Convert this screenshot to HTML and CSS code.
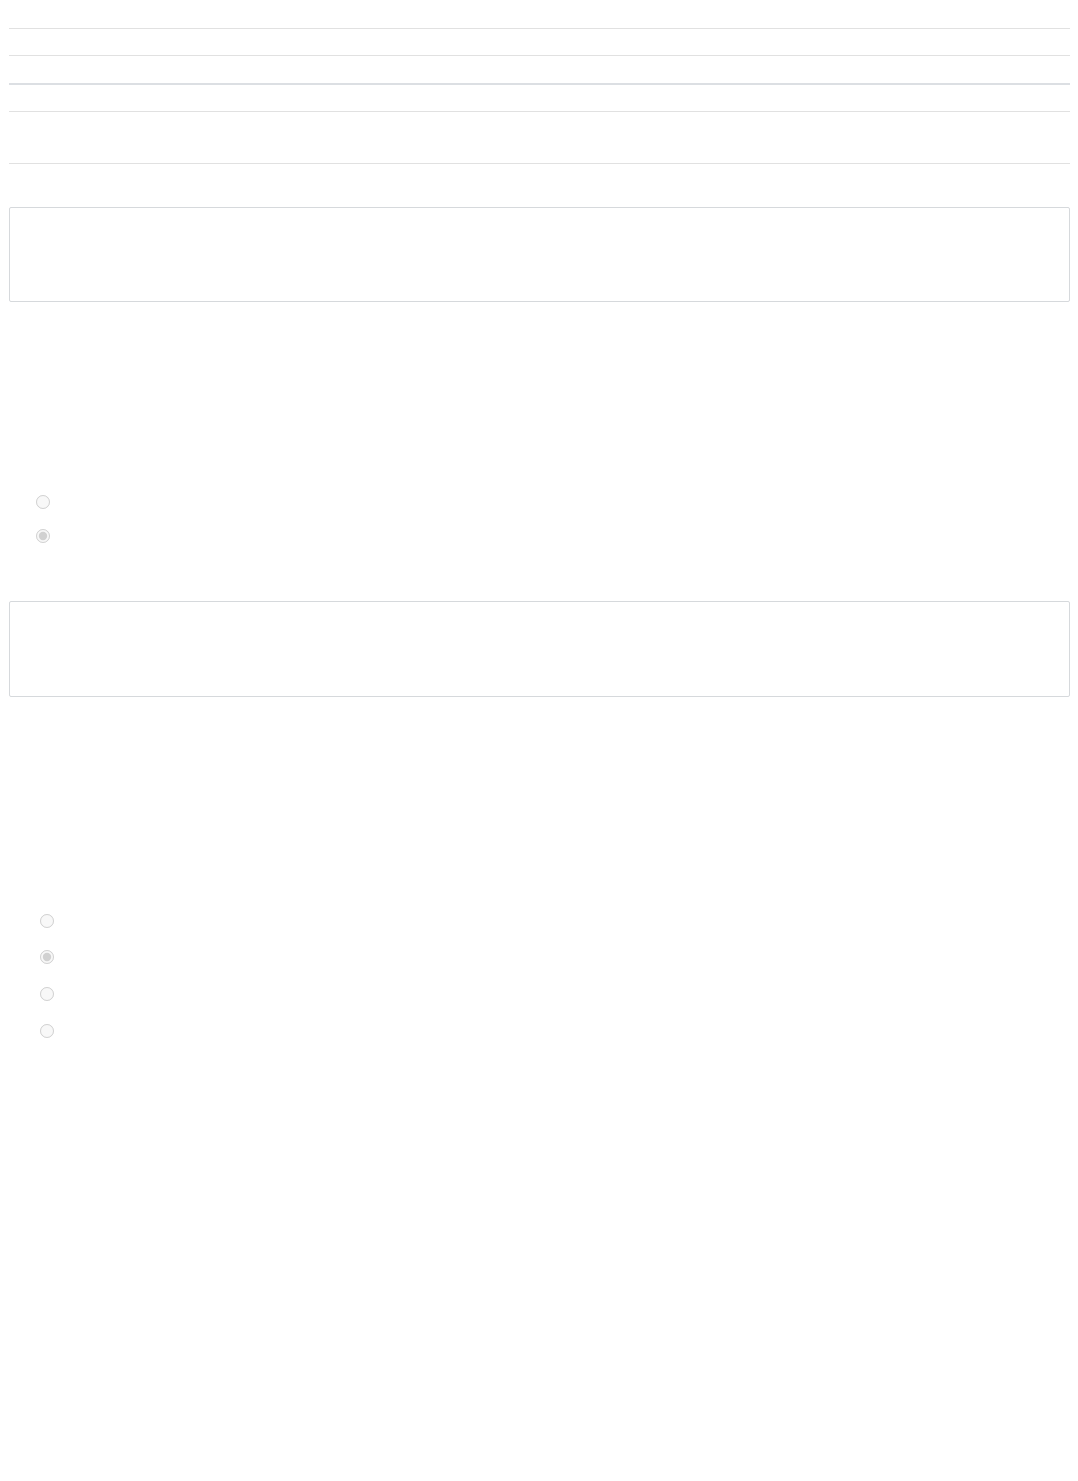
FILE: index.html
```html
<!DOCTYPE html>
<html lang="en">
<head>
    <meta charset="UTF-8">
    <meta name="viewport" content="width=device-width, initial-scale=1.0">
    <title>Form</title>
    <link rel="stylesheet" href="styles.css">
</head>
<body>
    <div class="page">
        <div class="rows">
            <div class="row row-first"></div>
            <div class="row"></div>
            <div class="row row-head"></div>
            <div class="row"></div>
            <div class="row row-tall"></div>
        </div>

        <div class="box box-first"></div>

        <div class="options options-first">
            <label class="option"><input type="radio" name="groupA" disabled></label>
            <label class="option"><input type="radio" name="groupA" checked disabled></label>
        </div>

        <div class="box box-second"></div>

        <div class="options options-second">
            <label class="option"><input type="radio" name="groupB" disabled></label>
            <label class="option"><input type="radio" name="groupB" checked disabled></label>
            <label class="option"><input type="radio" name="groupB" disabled></label>
            <label class="option"><input type="radio" name="groupB" disabled></label>
        </div>
    </div>
</body>
</html>
```

FILE: styles.css
```css
body {
    font-family: 'Liberation Sans', Arial, sans-serif;
    background-color: #fff;
    margin: 0;
}

.page {
    padding: 0 8px 0 9px;
}

.rows {
    display: flex;
    flex-direction: column;
}

.row {
    height: 26px;
    border-bottom: 1px solid #e1e1e1;
}

.row-first {
    height: 28px;
}

.row-head {
    height: 27px;
    border-bottom: 2px solid #dcdfe3;
}

.row-tall {
    height: 51px;
}

.box {
    height: 95px;
    box-sizing: border-box;
    border: 1px solid #d6d9dc;
    border-radius: 2px;
}

.box-first {
    margin-top: 43px;
}

.box-second {
    margin-top: 38px;
    height: 96px;
}

.options {
    display: flex;
    flex-direction: column;
}

.options-first {
    margin-top: 193px;
    padding-left: 27px;
}

.options-first .option {
    height: 34px;
}

.options-second {
    margin-top: 217px;
    padding-left: 31px;
}

.options-second .option {
    height: 37px;
}

.options-second .option:first-child {
    height: 36px;
}

.option {
    display: flex;
    align-items: flex-start;
}

.option input {
    width: 14px;
    height: 14px;
    margin: 0;
}
```
